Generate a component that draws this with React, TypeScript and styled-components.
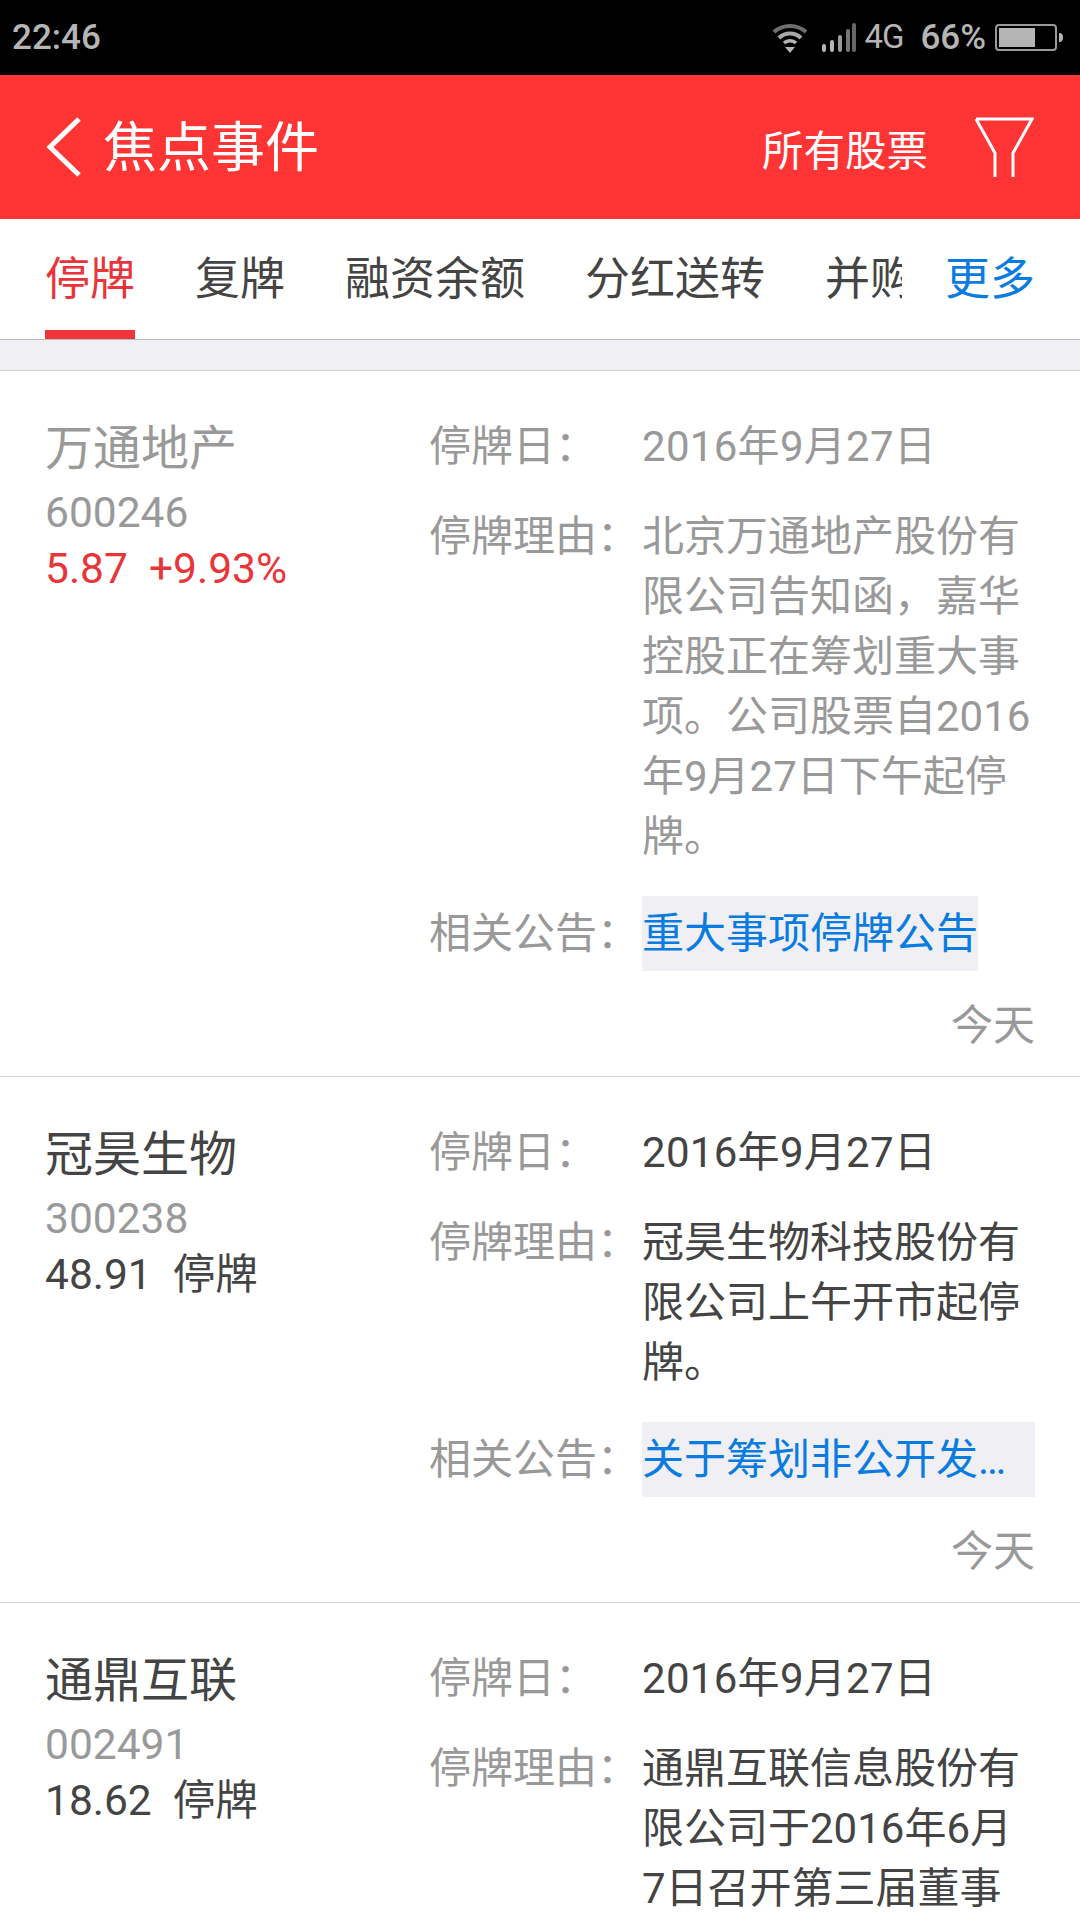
import React from 'react';
import styled, { createGlobalStyle } from 'styled-components';

const GlobalStyle = createGlobalStyle`
  html, body {
    margin: 0;
    padding: 0;
    background: #fff;
  }
  body {
    font-family: Roboto, "Noto Sans CJK SC", sans-serif;
  }
`;

const Page = styled.div`
  width: 1080px;
  height: 1920px;
  overflow: hidden;
  background: #fff;
`;

const StatusBar = styled.div`
  height: 75px;
  background: #000;
  color: #b5b5b5;
  display: flex;
  align-items: center;
  justify-content: space-between;
  padding: 0 17px 0 12px;
`;

const Clock = styled.span`
  font-size: 35px;
  font-weight: 500;
`;

const StatusIcons = styled.div`
  display: flex;
  align-items: center;
`;

const NetLabel = styled.span`
  font-size: 33px;
  font-weight: 400;
  margin: 0 17px 2px 7px;
  letter-spacing: -1px;
`;

const BatteryLabel = styled.span`
  font-size: 35px;
  font-weight: 500;
  margin-right: 9px;
`;

const Header = styled.div`
  height: 144px;
  background: #ff3535;
  color: #fff;
  display: flex;
  align-items: center;
  padding: 0 46px;
`;

const HeaderTitle = styled.h1`
  margin: 4px 0 0 21px;
  font-size: 54px;
  font-weight: 400;
  line-height: 1;
  flex: 1;
`;

const StockFilter = styled.span`
  font-size: 41.5px;
  margin: 2px 46px 0 0;
`;

const TabBar = styled.div`
  height: 120px;
  display: flex;
  padding: 0 45px;
  border-bottom: 1px solid #bdbdbd;
  box-sizing: content-box;
`;

const TabScroller = styled.div`
  width: 857px;
  overflow: hidden;
  display: flex;
  gap: 60px;
`;

const Tab = styled.div<{ $active?: boolean }>`
  flex: none;
  height: 120px;
  box-sizing: border-box;
  font-size: 45px;
  line-height: 122px;
  color: ${(p) => (p.$active ? '#e8353a' : '#444')};
  border-bottom: 9px solid ${(p) => (p.$active ? '#f0353a' : 'transparent')};
  white-space: nowrap;
`;

const MoreTab = styled.div`
  margin-left: auto;
  font-size: 45px;
  line-height: 122px;
  color: #0a7be0;
`;

const Band = styled.div`
  height: 30px;
  background: #efeff4;
  border-bottom: 1px solid #cfcfcf;
`;

const Item = styled.div`
  border-bottom: 1px solid #d4d4d4;
  padding: 45px 45px 0;
  display: grid;
  grid-template-columns: 384px 1fr;
`;

const StockInfo = styled.div`
  display: flex;
  flex-direction: column;
`;

const StockName = styled.div<{ $muted?: boolean }>`
  font-size: 48px;
  line-height: 60px;
  margin-top: 3px;
  color: ${(p) => (p.$muted ? '#999' : '#444')};
`;

const StockCode = styled.div`
  font-size: 42.5px;
  line-height: 56px;
  margin-top: 6px;
  color: #999;
`;

const StockPrice = styled.div<{ $up?: boolean }>`
  font-size: 42.5px;
  line-height: 56px;
  color: ${(p) => (p.$up ? '#e8353a' : '#444')};
  white-space: pre;
`;

const Details = styled.div`
  display: flex;
  flex-direction: column;
  gap: 30px;
  padding-top: 1px;
`;

const Field = styled.div`
  display: grid;
  grid-template-columns: 213px 393px;
  font-size: 42px;
  line-height: 60px;
`;

const Label = styled.div`
  color: #999;
  white-space: nowrap;
`;

const Value = styled.div<{ $muted?: boolean }>`
  color: ${(p) => (p.$muted ? '#999' : '#444')};
`;

const DateValue = styled(Value)`
  letter-spacing: 0.3px;
`;

const Notice = styled.div`
  justify-self: start;
  max-width: 100%;
  box-sizing: border-box;
  height: 75px;
  line-height: 75px;
  background: #efeff4;
  color: #0a7be0;
  white-space: nowrap;
  overflow: hidden;
  text-overflow: ellipsis;
`;

const NoticeField = styled(Field)`
  line-height: 75px;
  margin-top: -1px;
`;

const Time = styled.div`
  grid-column: 1 / -1;
  text-align: right;
  font-size: 42px;
  line-height: 60px;
  color: #999;
  margin: 25px 0 20px;
`;

const WifiIcon = () => (
  <svg width="36" height="30" viewBox="0 0 36 30" fill="none">
    <path d="M2 9 C11 1 25 1 34 9" stroke="#6e6e6e" strokeWidth="4" />
    <path d="M7 15 C13 9 23 9 29 15" stroke="#a8a8a8" strokeWidth="4" />
    <path d="M12 20 C15 17 21 17 24 20" stroke="#b5b5b5" strokeWidth="3.5" />
    <path d="M13 24 H23 L18 30 Z" fill="#b5b5b5" />
  </svg>
);

const SignalIcon = () => (
  <svg width="36" height="30" viewBox="0 0 36 30" style={{ marginLeft: 13 }}>
    <rect x="1" y="21" width="4" height="8" rx="2" fill="#b5b5b5" />
    <rect x="9" y="17" width="4" height="12" rx="2" fill="#b5b5b5" />
    <rect x="17" y="12" width="4" height="17" rx="2" fill="#9a9a9a" />
    <rect x="25" y="6" width="4" height="23" rx="2" fill="#777" />
    <rect x="31" y="0" width="4" height="29" rx="2" fill="#666" />
  </svg>
);

const BatteryIcon = () => (
  <svg width="68" height="28" viewBox="0 0 68 28" fill="none">
    <rect x="1" y="1" width="60" height="25" rx="3" stroke="#9a9a9a" strokeWidth="2" />
    <rect x="4" y="4" width="36" height="19" fill="#b5b5b5" />
    <path d="M64 9 C67 9 68 11 68 13.500 C68 16 67 18 64 18 Z" fill="#b5b5b5" />
  </svg>
);

const BackIcon = () => (
  <svg width="36" height="60" viewBox="0 0 36 60" fill="none">
    <path d="M33 2 L4 30 L33 58" stroke="#fff" strokeWidth="5" />
  </svg>
);

const FilterIcon = () => (
  <svg width="60" height="60" viewBox="0 0 60 60" fill="none">
    <path d="M2 2 H58 L39 36 V60 M21 60 V36 L2 2" stroke="#fff" strokeWidth="3" />
  </svg>
);

interface Suspension {
  name: string;
  code: string;
  price: string;
  up?: boolean;
  muted?: boolean;
  date: string;
  reason: string;
  notice?: string;
}

const suspensions: Suspension[] = [
  {
    name: '万通地产',
    code: '600246',
    price: '5.87  +9.93%',
    up: true,
    muted: true,
    date: '2016年9月27日',
    reason: '北京万通地产股份有限公司告知函，嘉华控股正在筹划重大事项。公司股票自2016年9月27日下午起停牌。',
    notice: '重大事项停牌公告',
  },
  {
    name: '冠昊生物',
    code: '300238',
    price: '48.91  停牌',
    date: '2016年9月27日',
    reason: '冠昊生物科技股份有限公司上午开市起停牌。',
    notice: '关于筹划非公开发行股票事项',
  },
  {
    name: '通鼎互联',
    code: '002491',
    price: '18.62  停牌',
    date: '2016年9月27日',
    reason: '通鼎互联信息股份有限公司于2016年6月7日召开第三届董事会第二十次会议，审议通过相关议案，公司股票停牌。',
    notice: '重大事项停牌公告',
  },
];

const tabs = ['停牌', '复牌', '融资余额', '分红送转', '并购'];

export default function App() {
  return (
    <Page lang="zh-CN">
      <GlobalStyle />
      <StatusBar>
        <Clock>22:46</Clock>
        <StatusIcons>
          <WifiIcon />
          <SignalIcon />
          <NetLabel>4G</NetLabel>
          <BatteryLabel>66%</BatteryLabel>
          <BatteryIcon />
        </StatusIcons>
      </StatusBar>
      <Header>
        <BackIcon />
        <HeaderTitle>焦点事件</HeaderTitle>
        <StockFilter>所有股票</StockFilter>
        <FilterIcon />
      </Header>
      <TabBar>
        <TabScroller>
          {tabs.map((tab, i) => (
            <Tab key={tab} $active={i === 0}>
              {tab}
            </Tab>
          ))}
        </TabScroller>
        <MoreTab>更多</MoreTab>
      </TabBar>
      <Band />
      {suspensions.map((s) => (
        <Item key={s.code}>
          <StockInfo>
            <StockName $muted={s.muted}>{s.name}</StockName>
            <StockCode>{s.code}</StockCode>
            <StockPrice $up={s.up}>{s.price}</StockPrice>
          </StockInfo>
          <Details>
            <Field>
              <Label>停牌日：</Label>
              <DateValue $muted={s.muted}>{s.date}</DateValue>
            </Field>
            <Field>
              <Label>停牌理由：</Label>
              <Value $muted={s.muted}>{s.reason}</Value>
            </Field>
            {s.notice && (
              <NoticeField>
                <Label>相关公告：</Label>
                <Notice>{s.notice}</Notice>
              </NoticeField>
            )}
          </Details>
          <Time>今天</Time>
        </Item>
      ))}
    </Page>
  );
}
